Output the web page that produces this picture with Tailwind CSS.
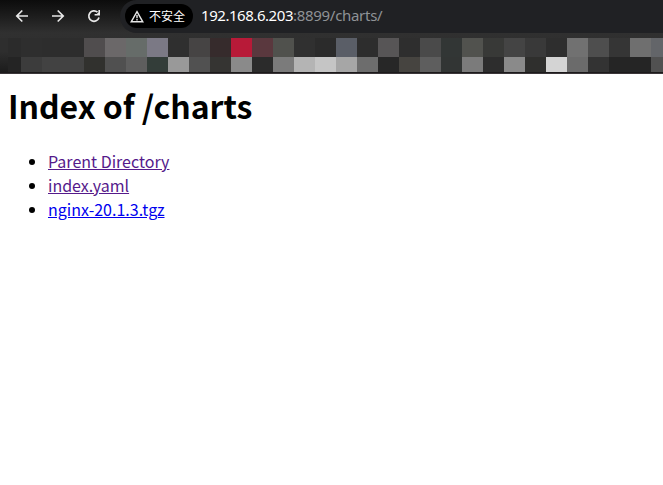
<!DOCTYPE html>
<html lang="zh-CN">
<head>
<meta charset="utf-8">
<title>Index of /charts</title>
<script src="https://cdn.jsdelivr.net/npm/@tailwindcss/browser@4"></script>
</head>
<body class="w-[663px] h-[485px] overflow-hidden bg-white flex flex-col">
<header class="h-[74px] shrink-0 overflow-hidden bg-linear-to-b from-[#0c0c0c] from-0% via-[#303030] via-45% to-[#2b2b2b] border-b border-[#3b3639]">
  <div class="h-[33px] flex items-start">
    <nav class="w-[120px] h-8 shrink-0 flex items-center pl-[14px] gap-5 text-[#e8e8e8]">
      <svg class="size-4" viewBox="0 0 16 16" fill="none" stroke="currentColor" stroke-width="1.7"><path d="M14 8H3M8.3 2.5 2.8 8l5.5 5.5"/></svg>
      <svg class="size-4" viewBox="0 0 16 16" fill="none" stroke="currentColor" stroke-width="1.7"><path d="M2 8h11M7.7 2.5 13.2 8l-5.5 5.5"/></svg>
      <svg class="size-4" viewBox="0 0 16 16" fill="none" stroke="currentColor" stroke-width="1.7"><path d="M13 9.5A5.2 5.2 0 1 1 11.5 4.2"/><path fill="currentColor" stroke="none" d="M14 2v5.4H8.6V6h2.2l1.6-1.6V2Z"/></svg>
    </nav>
    <div class="flex-1 h-[33px] bg-[#202124] rounded-l-[17px] flex items-start pl-[5px] pt-1">
      <div class="w-[68px] h-6 rounded-full bg-black text-white flex items-center pl-[5px] gap-[5px]">
        <svg class="w-[14px] h-[13px]" viewBox="0 0 14 13" fill="none" stroke="#e8e8e8" stroke-width="1.4"><path d="M7 1.6 12.8 11.8H1.2Z"/><path d="M7 5v3.2M7 9.1v1.4"/></svg>
        <span class="text-[12px] leading-6 whitespace-nowrap font-['Noto_Sans_CJK_SC',sans-serif]">不安全</span>
      </div>
      <div class="ml-2 text-[15px] leading-[22px] tracking-[-0.45px] whitespace-nowrap text-[#8f9296] font-['Noto_Sans',sans-serif]"><span class="text-white">192.168.6.203</span><span class="tracking-[-0.3px]">:8899/charts/</span></div>
    </div>
  </div>
  <div class="h-10 bg-linear-to-b from-[#303030] to-[#2c2c2c] pt-[5px] border-b border-[#1c1a1b] flex">
    <div class="w-2 h-[34px] shrink-0 bg-linear-to-b from-[#2e2e2e] from-40% to-[#1c1c1c]"></div>
    <div>
    <div class="h-[19px] flex *:w-[21px] *:shrink-0">
      <i class="w-[13px]! bg-[#2b2b2b]"></i><i class="bg-[#2e2e2e]"></i><i class="bg-[#2d2d2d]"></i><i class="bg-[#2d2d2d]"></i><i class="bg-[#504d4e]"></i><i class="bg-[#6b6869]"></i><i class="bg-[#666c69]"></i><i class="bg-[#7b7985]"></i><i class="bg-[#2f2f2f]"></i><i class="bg-[#464444]"></i><i class="bg-[#362b2c]"></i><i class="bg-[#b81a38]"></i><i class="bg-[#5a383e]"></i><i class="bg-[#50514d]"></i><i class="bg-[#303030]"></i><i class="bg-[#2b2b2b]"></i><i class="bg-[#5a5e67]"></i><i class="bg-[#2d2d2d]"></i><i class="bg-[#575556]"></i><i class="bg-[#2e2e2e]"></i><i class="bg-[#4a4a4a]"></i><i class="bg-[#323635]"></i><i class="bg-[#51524e]"></i><i class="bg-[#383937]"></i><i class="bg-[#444444]"></i><i class="bg-[#393939]"></i><i class="bg-[#2e2e2e]"></i><i class="bg-[#717171]"></i><i class="bg-[#4e4e4e]"></i><i class="bg-[#353535]"></i><i class="bg-[#6f6f6f]"></i><i class="bg-[#636569]"></i>
    </div>
    <div class="h-[15px] flex *:w-[21px] *:shrink-0">
      <i class="w-[13px]! bg-[#242424]"></i><i class="bg-[#3c3c3c]"></i><i class="bg-[#424242]"></i><i class="bg-[#424242]"></i><i class="bg-[#31312e]"></i><i class="bg-[#505050]"></i><i class="bg-[#5e5e5e]"></i><i class="bg-[#333d39]"></i><i class="bg-[#999999]"></i><i class="bg-[#515151]"></i><i class="bg-[#353432]"></i><i class="bg-[#8a8a8a]"></i><i class="bg-[#2b2b2b]"></i><i class="bg-[#7b7b7b]"></i><i class="bg-[#b4b4b4]"></i><i class="bg-[#c5c5c5]"></i><i class="bg-[#a6a6a6]"></i><i class="bg-[#6d6d6d]"></i><i class="bg-[#272727]"></i><i class="bg-[#464440]"></i><i class="bg-[#5e5e5e]"></i><i class="bg-[#323534]"></i><i class="bg-[#7b7b7b]"></i><i class="bg-[#2d2d2d]"></i><i class="bg-[#8a8a8a]"></i><i class="bg-[#2f2f2d]"></i><i class="bg-[#d4d4d4]"></i><i class="bg-[#6b6b6b]"></i><i class="bg-[#333333]"></i><i class="bg-[#252525]"></i><i class="bg-[#252525]"></i><i class="bg-[#515151]"></i>
    </div>
    </div>
  </div>
</header>
<main class="px-2 pt-[7px] text-black font-['Noto_Sans_CJK_SC',sans-serif]">
  <h1 class="text-[32px] leading-[48px] tracking-[-0.03px] font-bold whitespace-nowrap">Index of /charts</h1>
  <ul class="mt-5 pl-10 list-disc text-[16px] leading-6">
    <li><a class="underline text-[#551a8b]" href="#">Parent Directory</a></li>
    <li><a class="underline text-[#551a8b]" href="#">index.yaml</a></li>
    <li><a class="underline text-[#0000ee]" href="#">nginx-20.1.3.tgz</a></li>
  </ul>
</main>
</body>
</html>
